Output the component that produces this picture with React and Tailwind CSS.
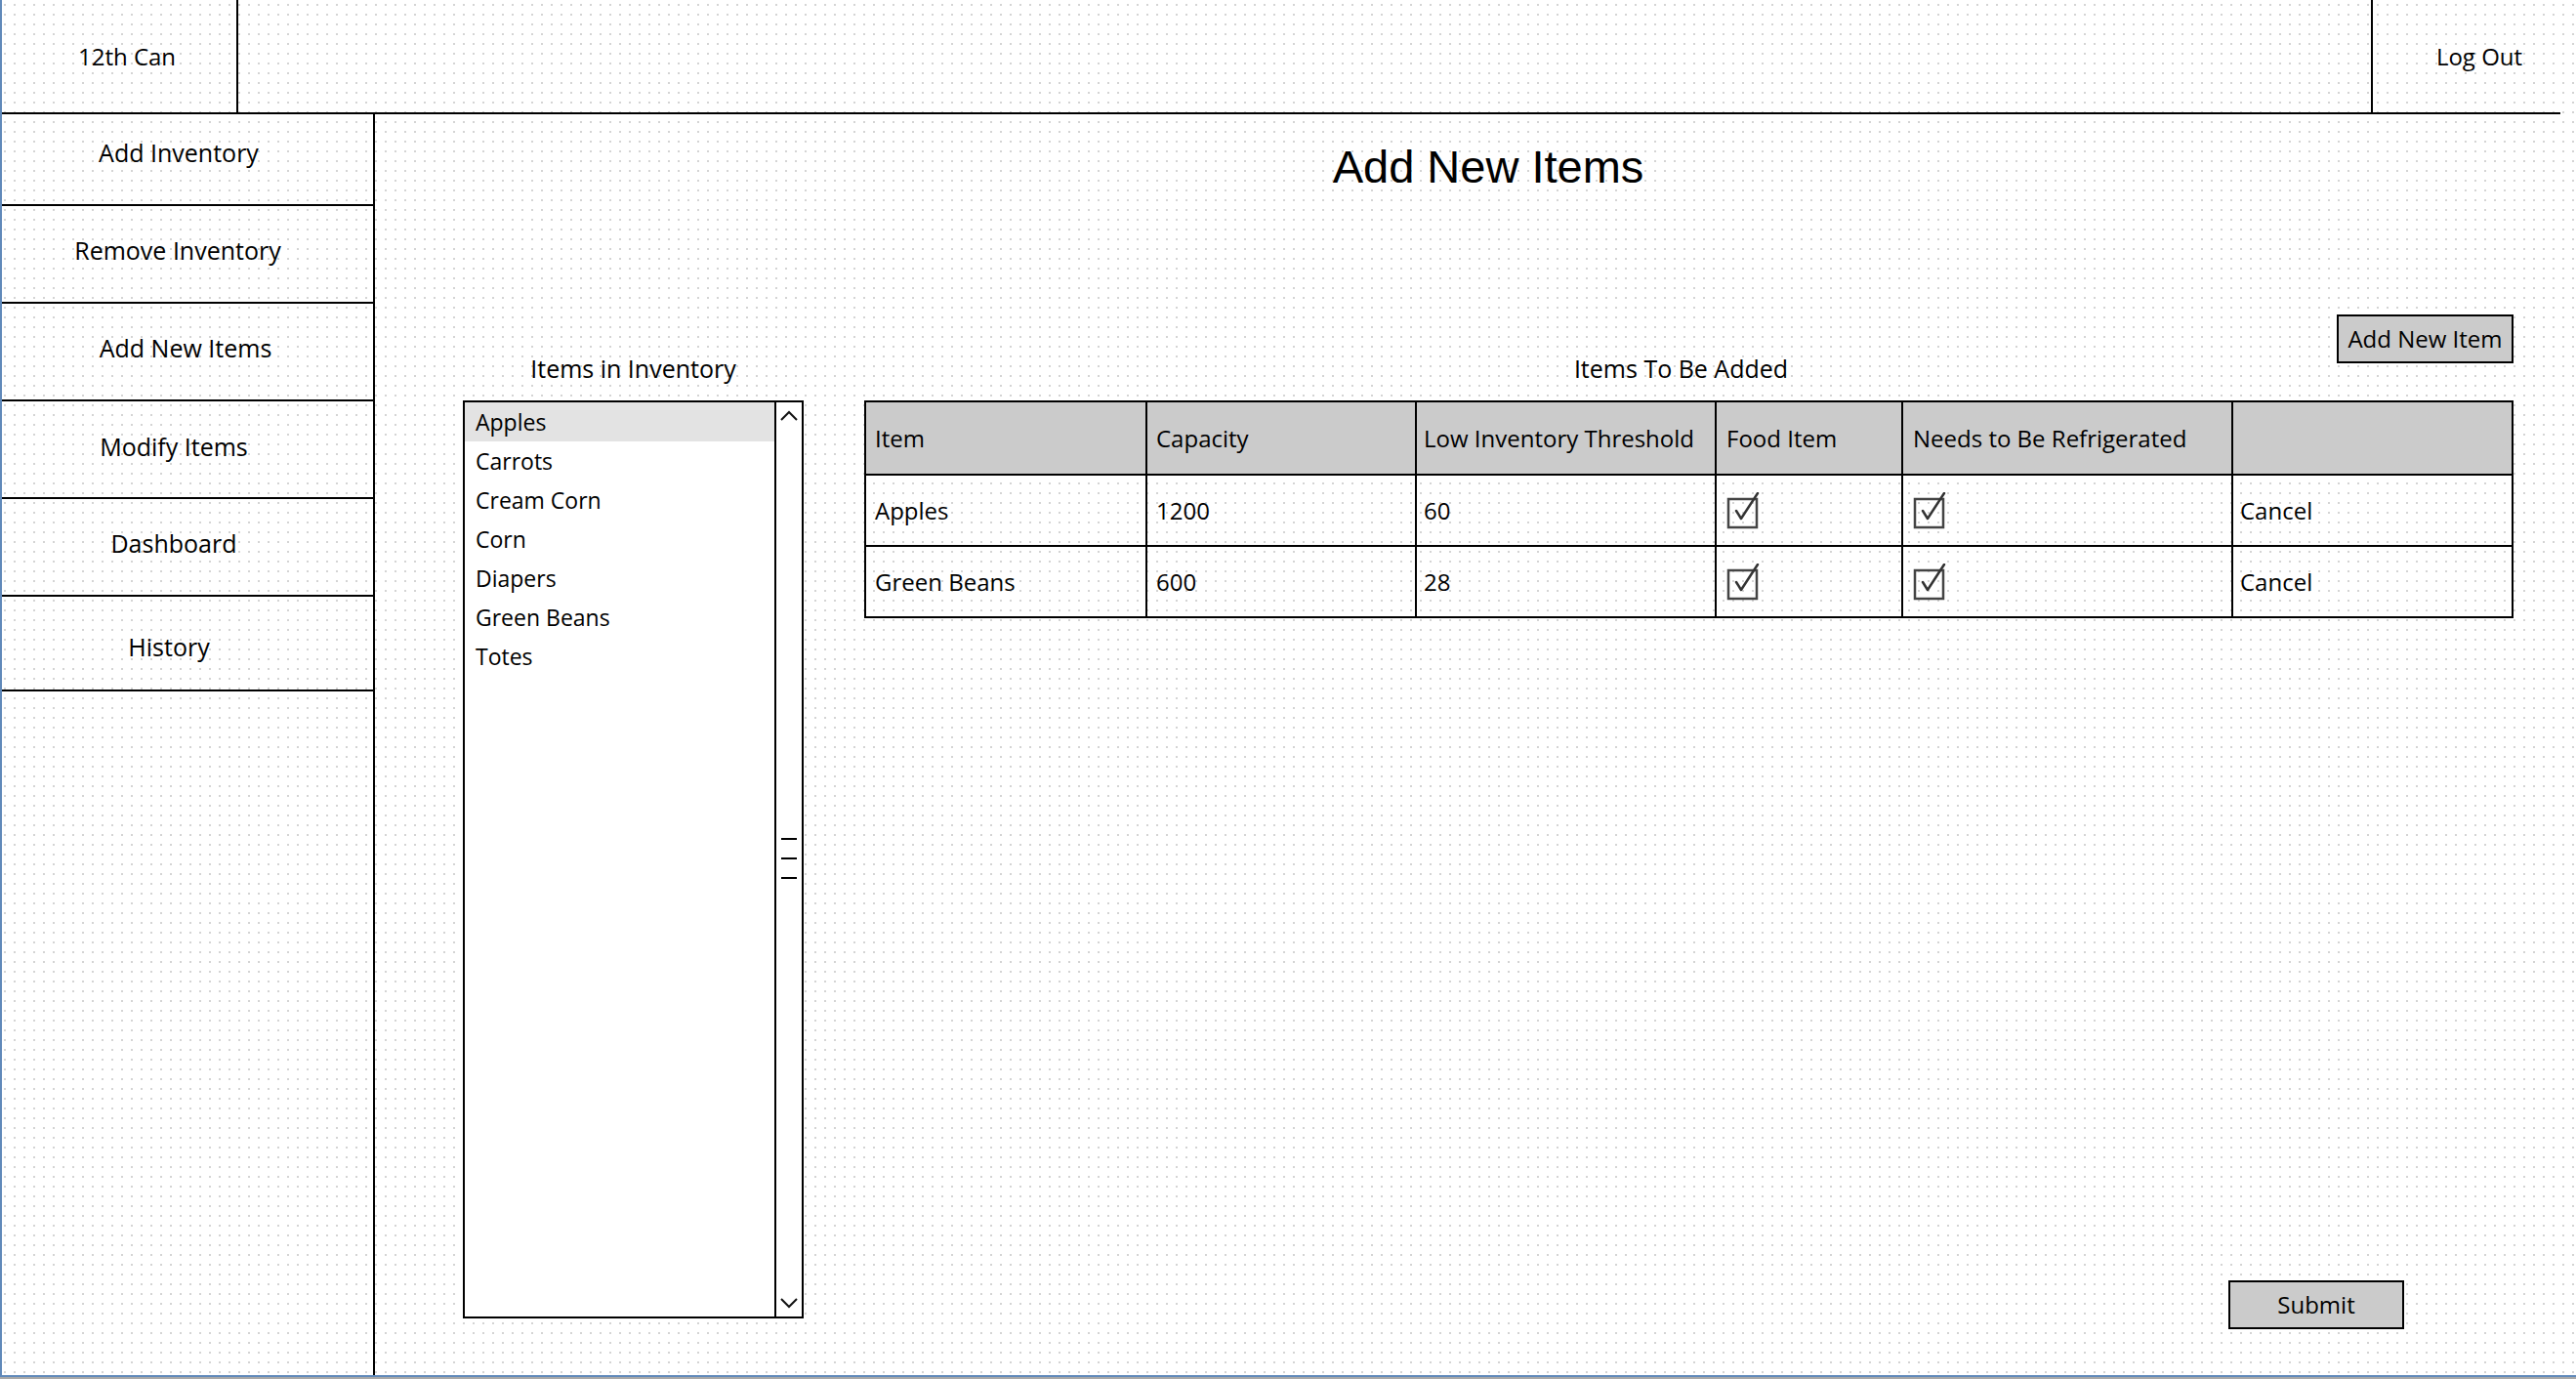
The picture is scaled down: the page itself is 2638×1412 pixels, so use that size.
import React from "react";

const sketch = "font-['Open_Sans',sans-serif]";

const navItems = [
  { label: "Add Inventory", cls: "h-[94px] pt-[23px] pr-[18px]" },
  { label: "Remove Inventory", cls: "h-[100px] pt-[29px] pr-[20px]" },
  { label: "Add New Items", cls: "h-[100px] pt-[29px] pr-[4px]" },
  { label: "Modify Items", cls: "h-[100px] pt-[30px] pr-[28px]" },
  { label: "Dashboard", cls: "h-[100px] pt-[29px] pr-[28px]" },
  { label: "History", cls: "h-[97px] pt-[35px] pr-[38px]" },
];

const inventory = ["Apples", "Carrots", "Cream Corn", "Corn", "Diapers", "Green Beans", "Totes"];

const pending = [
  { item: "Apples", capacity: "1200", threshold: "60" },
  { item: "Green Beans", capacity: "600", threshold: "28" },
];

const CheckBox = () => (
  <svg width="36" height="38" viewBox="0 0 36 38" className="block">
    <rect x="2" y="7" width="29" height="29" fill="none" stroke="#444" strokeWidth="2.5" />
    <path d="M10 19 L15 27 L32 1" fill="none" stroke="#333" strokeWidth="2.5" strokeLinecap="round" strokeLinejoin="round" />
  </svg>
);

const Chevron = ({ down }) => (
  <svg width="18" height="11" viewBox="0 0 18 11" className="block mx-auto">
    <polyline
      points={down ? "1,1 9,9 17,1" : "1,10 9,2 17,10"}
      fill="none"
      stroke="#111"
      strokeWidth="2"
    />
  </svg>
);

const InventoryList = () => (
  <div className="h-[940px] border-2 border-black bg-white flex">
    <div className="flex-1">
      {inventory.map((name, i) => (
        <div
          key={name}
          className={`h-[40px] pl-[11px] flex items-center text-[23px] ${i === 0 ? "bg-[#e3e3e3]" : ""}`}
        >
          {name}
        </div>
      ))}
    </div>
    <div className="w-[28px] border-l-2 border-black flex flex-col">
      <div className="mt-[8px]">
        <Chevron />
      </div>
      <div className="mt-[427px] flex flex-col gap-[18px] items-center">
        <div className="h-[2px] w-[16px] bg-black" />
        <div className="h-[2px] w-[16px] bg-black" />
        <div className="h-[2px] w-[16px] bg-black" />
      </div>
      <div className="flex-1" />
      <div className="mb-[8px]">
        <Chevron down />
      </div>
    </div>
  </div>
);

const PendingTable = () => (
  <table className="w-full table-fixed border-collapse border-2 border-black text-[24px]">
    <colgroup>
      <col className="w-[288px]" />
      <col className="w-[276px]" />
      <col className="w-[307px]" />
      <col className="w-[191px]" />
      <col className="w-[338px]" />
      <col />
    </colgroup>
    <thead>
      <tr className="h-[75px] bg-[#cbcbcb] text-left">
        <th className="border-2 border-black pl-[9px] font-normal">Item</th>
        <th className="border-2 border-black pl-[9px] font-normal">Capacity</th>
        <th className="border-2 border-black pl-[7px] font-normal whitespace-nowrap">Low Inventory Threshold</th>
        <th className="border-2 border-black pl-[10px] font-normal">Food Item</th>
        <th className="border-2 border-black pl-[10px] font-normal whitespace-nowrap">Needs to Be Refrigerated</th>
        <th className="border-2 border-black" />
      </tr>
    </thead>
    <tbody>
      {pending.map((row) => (
        <tr key={row.item} className="h-[73px]">
          <td className="border-2 border-black pl-[9px]">{row.item}</td>
          <td className="border-2 border-black pl-[9px]">{row.capacity}</td>
          <td className="border-2 border-black pl-[7px]">{row.threshold}</td>
          <td className="border-2 border-black pl-[10px]">
            <CheckBox />
          </td>
          <td className="border-2 border-black pl-[10px]">
            <CheckBox />
          </td>
          <td className="border-2 border-black pl-[7px]">Cancel</td>
        </tr>
      ))}
    </tbody>
  </table>
);

export default function App() {
  return (
    <div
      className={`w-[2638px] h-[1412px] flex flex-col overflow-hidden bg-white bg-[radial-gradient(#d4d4d4_1px,transparent_1.2px)] bg-[size:10px_10px] text-black ${sketch}`}
    >
      <div className="flex-1 flex flex-col border-l-2 border-[#6089ba]">
        {/* top bar */}
        <div className="h-[117px] w-[2620px] flex border-b-2 border-black">
          <div className="w-[242px] border-r-2 border-black flex items-center justify-center pl-[16px] text-[24px]">
            12th Can
          </div>
          <div className="flex-1" />
          <div className="w-[194px] border-l-2 border-black flex items-center justify-center pl-[26px] text-[24px]">
            Log Out
          </div>
        </div>

        <div className="flex-1 flex">
          {/* side nav */}
          <div className="w-[382px] border-r-2 border-black flex flex-col">
            {navItems.map((n) => (
              <div
                key={n.label}
                className={`${n.cls} border-b-2 border-black text-center text-[25px] leading-[32px]`}
              >
                {n.label}
              </div>
            ))}
          </div>

          {/* main */}
          <div className="flex-1 pl-[90px] pr-[64px]">
            <h1 className="mt-[30px] text-center text-[47px] leading-none font-['Liberation_Sans',Arial,sans-serif]">
              Add New Items
            </h1>

            <div className="mt-[128px] flex gap-[62px]">
              <div className="w-[349px]">
                <div className="h-[88px] flex items-end justify-center pb-[17px] text-[25px] leading-[32px]">
                  Items in Inventory
                </div>
                <InventoryList />
              </div>

              <div className="flex-1">
                <div className="h-[88px] grid grid-cols-[1fr_auto_1fr]">
                  <div />
                  <div className="self-end pb-[17px] pr-[16px] text-[25px] leading-[32px]">Items To Be Added</div>
                  <button className="justify-self-end self-start h-[50px] w-[181px] border-2 border-black bg-[#cbcbcb] text-[24px] leading-none">
                    Add New Item
                  </button>
                </div>
                <PendingTable />
                <div className="mt-[678px] flex justify-end pr-[112px]">
                  <button className="h-[50px] w-[180px] border-2 border-black bg-[#cbcbcb] text-[24px]">
                    Submit
                  </button>
                </div>
              </div>
            </div>
          </div>
        </div>
      </div>
      <div className="h-[2px] bg-[#6089ba]" />
      <div className="h-[2px] bg-[#a9a9a9]" />
    </div>
  );
}
